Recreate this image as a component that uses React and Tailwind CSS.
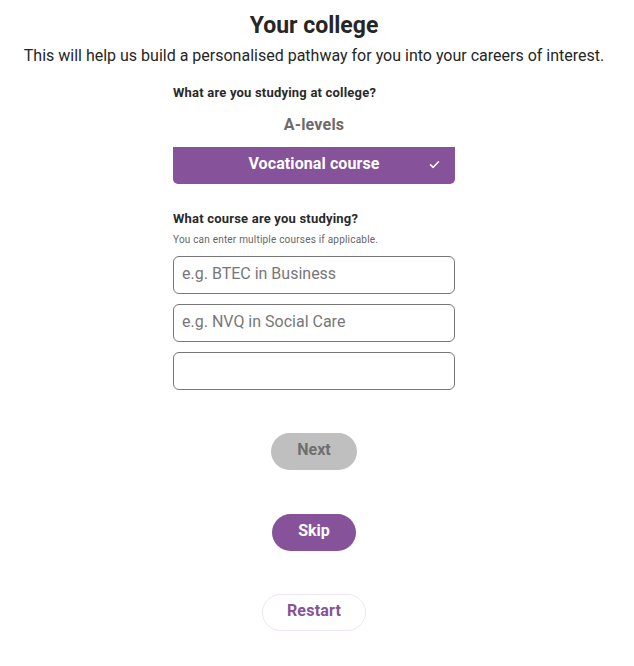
const font = { fontFamily: "Roboto, 'Liberation Sans', sans-serif" };

const placeholders = ["e.g. BTEC in Business", "e.g. NVQ in Social Care", ""];

export default function App() {
  return (
    <div className="min-h-[666px] bg-white pr-[6px] text-[#2b2b2b]" style={font}>
      <div className="flex flex-col items-center pt-[11px]">
        <h1 className="text-[23px] font-bold leading-[30px] text-[#262626]">Your college</h1>
        <p className="mt-[3px] text-[16px] leading-[24px] text-[#262626]">
          This will help us build a personalised pathway for you into your careers of interest.
        </p>

        <div className="mt-[16px] flex w-[282px] flex-col">
          <label className="text-[13px] font-bold leading-[18px] tracking-[0.2px] text-[#2a2a2a]">
            What are you studying at college?
          </label>

          <button className="mt-[10px] h-[26px] text-center text-[16px] font-bold tracking-[0.2px] text-[#6b6b6b]">
            A-levels
          </button>

          <button className="relative mt-[9px] flex h-[37px] items-center justify-center rounded-b-[5px] bg-[#86529a] pb-[3px] text-[16px] font-bold tracking-[0.1px] text-white">
            Vocational course
            <svg
              className="absolute right-[15px] top-[13px]"
              width="11"
              height="9"
              viewBox="0 0 11 9"
              fill="none"
              stroke="white"
              strokeWidth="1.6"
              strokeLinecap="round"
              strokeLinejoin="round"
            >
              <path d="M1.5 4.8 L4.2 7.3 L9.5 1.8" />
            </svg>
          </button>

          <label className="mt-[26px] text-[13px] font-bold leading-[18px] tracking-[0.2px] text-[#2a2a2a]">
            What course are you studying?
          </label>
          <p className="mt-[5px] text-[10px] leading-[13px] tracking-[0.2px] text-[#666]">
            You can enter multiple courses if applicable.
          </p>

          <div className="mt-[10px] flex flex-col gap-[10px]">
            {placeholders.map((p, i) => (
              <input
                key={i}
                placeholder={p}
                className="h-[38px] w-full rounded-[6px] border border-[#777] px-[8px] pb-[3px] text-[16px] text-[#262626] placeholder:text-[#777] outline-none"
                style={font}
              />
            ))}
          </div>
        </div>

        <button className="mt-[43px] h-[37px] w-[86px] rounded-full bg-[#bfbfbf] pb-[3px] text-[16px] font-bold text-[#6f6f6f]">
          Next
        </button>

        <button className="mt-[44px] h-[37px] w-[84px] rounded-full bg-[#86529a] pb-[3px] text-[16px] font-bold text-white">
          Skip
        </button>

        <button className="mt-[43px] h-[37px] w-[104px] rounded-full border border-[#efe5f1] bg-white pb-[3px] text-[16px] font-bold tracking-[0.2px] text-[#86529a]">
          Restart
        </button>
      </div>
    </div>
  );
}
